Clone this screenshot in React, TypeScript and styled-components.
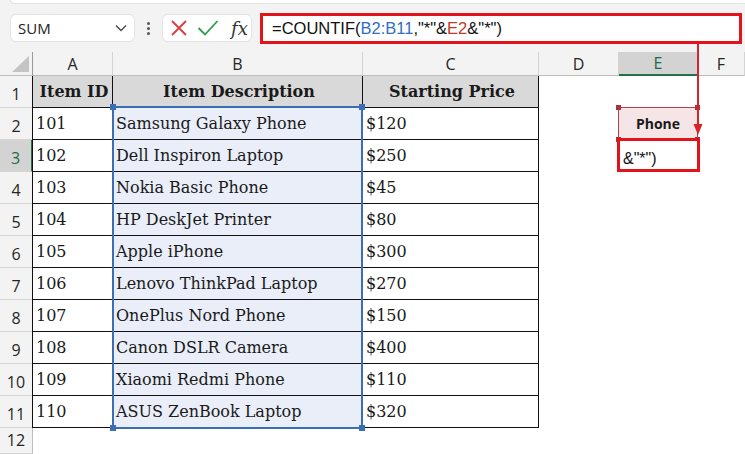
import * as React from 'react'
import styled, { createGlobalStyle } from 'styled-components'

const rows: [string, string, string][] = [
  ['101', 'Samsung Galaxy Phone', '$120'],
  ['102', 'Dell Inspiron Laptop', '$250'],
  ['103', 'Nokia Basic Phone', '$45'],
  ['104', 'HP DeskJet Printer', '$80'],
  ['105', 'Apple iPhone', '$300'],
  ['106', 'Lenovo ThinkPad Laptop', '$270'],
  ['107', 'OnePlus Nord Phone', '$150'],
  ['108', 'Canon DSLR Camera', '$400'],
  ['109', 'Xiaomi Redmi Phone', '$110'],
  ['110', 'ASUS ZenBook Laptop', '$320'],
]

const letters = ['A', 'B', 'C', 'D', 'E', 'F']

const App: React.FC = () => (
  <Page>
    <GlobalStyle />
    <TopBar>
      <RibbonEdge />
      <FormulaRow>
        <NameBox>
          <span>SUM</span>
          <svg width="12" height="8" viewBox="0 0 12 8">
            <path d="M1 1.5 L6 6.5 L11 1.5" fill="none" stroke="#444" strokeWidth="1.3" />
          </svg>
        </NameBox>
        <Dots>
          <i />
          <i />
          <i />
        </Dots>
        <FxBox>
          <svg width="18" height="18" viewBox="0 0 18 18">
            <path d="M2 2 L16 16 M16 2 L2 16" stroke="#e0393e" strokeWidth="1.8" />
          </svg>
          <svg width="22" height="18" viewBox="0 0 22 18">
            <path d="M1.5 9 L8 15.5 L20.5 2" fill="none" stroke="#2f9a4c" strokeWidth="1.8" />
          </svg>
          <Fx>fx</Fx>
        </FxBox>
        <FormulaInput>
          =COUNTIF(<Ref $c="#2f6fc0">B2:B11</Ref>,"*"&amp;<Ref $c="#c0392b">E2</Ref>&amp;"*")
        </FormulaInput>
      </FormulaRow>
    </TopBar>

    <Sheet>
      <Corner>
        <svg width="17" height="16" viewBox="0 0 17 16">
          <path d="M17 0 L17 16 L0 16 Z" fill="#c4c4c4" />
        </svg>
      </Corner>
      {letters.map((l) => (
        <ColHead key={l} $active={l === 'E'}>
          {l}
        </ColHead>
      ))}

      {Array.from({ length: 12 }, (_, i) => (
        <RowHead key={i} $active={i === 2} style={{ gridRow: i + 2 }}>
          {i + 1}
        </RowHead>
      ))}

      <Cell $head $first style={{ gridRow: 2, gridColumn: 2 }}>Item ID</Cell>
      <Cell $head style={{ gridRow: 2, gridColumn: 3 }}>Item Description</Cell>
      <Cell $head style={{ gridRow: 2, gridColumn: 4 }}>Starting Price</Cell>

      {rows.map((r, i) => (
        <React.Fragment key={r[0]}>
          <Cell $first style={{ gridRow: i + 3, gridColumn: 2 }}>{r[0]}</Cell>
          <Cell $sel style={{ gridRow: i + 3, gridColumn: 3 }}>{r[1]}</Cell>
          <Cell style={{ gridRow: i + 3, gridColumn: 4 }}>{r[2]}</Cell>
        </React.Fragment>
      ))}

      <Selection>
        <Handle $x="left" $y="top" />
        <Handle $x="right" $y="top" />
        <Handle $x="left" $y="bottom" />
        <Handle $x="right" $y="bottom" />
      </Selection>

      <LookupCell>
        Phone
        <RedHandle $x="left" $y="top" />
        <RedHandle $x="right" $y="top" />
        <RedHandle $x="left" $y="bottom" />
        <RedHandle $x="right" $y="bottom" />
      </LookupCell>

      <EditCell>
        <Clipped>B11</Clipped>
        <span>&amp;"*")</span>
      </EditCell>
    </Sheet>

    <Arrow width="12" height="96" viewBox="0 0 12 96">
      <path d="M6 0 L6 84" stroke="#d8232a" strokeWidth="2" />
      <path d="M1.5 80 L10.5 80 L6 91 Z" fill="#d8232a" />
    </Arrow>
  </Page>
)

const GlobalStyle = createGlobalStyle`
  html, body {
    margin: 0;
    padding: 0;
    background: #ffffff;
  }
  * {
    box-sizing: border-box;
  }
`

const Page = styled.div`
  position: relative;
  width: 745px;
  height: 454px;
  overflow: hidden;
  font-family: 'Open Sans', 'Noto Sans', sans-serif;
`

const TopBar = styled.div`
  height: 52px;
  background: #f3f3f3;
`

const RibbonEdge = styled.div`
  height: 4px;
  margin-left: 10px;
  background: #ffffff;
  border-bottom: 1px solid #e2e2e2;
  border-left: 1px solid #e2e2e2;
  border-bottom-left-radius: 6px;
`

const FormulaRow = styled.div`
  display: flex;
  align-items: center;
  height: 40px;
  padding: 8px 3px 0 10px;
`

const NameBox = styled.div`
  width: 125px;
  height: 28px;
  display: flex;
  align-items: center;
  justify-content: space-between;
  padding: 0 7px 0 7px;
  background: #fff;
  border: 1px solid #e4e4e4;
  border-radius: 6px;
  font-size: 15px;
  color: #222;
`

const Dots = styled.div`
  width: 27px;
  display: flex;
  flex-direction: column;
  align-items: center;
  gap: 2px;

  i {
    width: 3px;
    height: 3px;
    border-radius: 50%;
    background: #555;
  }
`

const FxBox = styled.div`
  width: 90px;
  height: 28px;
  display: flex;
  align-items: center;
  gap: 9px;
  padding-left: 7px;
  background: #fff;
  border: 1px solid #e4e4e4;
  border-radius: 6px;
`

const Fx = styled.span`
  font-family: 'DejaVu Serif', 'Liberation Serif', serif;
  font-style: italic;
  font-size: 18px;
  color: #333;
  margin-left: 3px;
`

const FormulaInput = styled.div`
  flex: 1;
  margin-left: 8px;
  height: 31px;
  display: flex;
  align-items: center;
  padding-left: 9px;
  background: #fff;
  border: 3px solid #e3131b;
  font-family: 'Liberation Sans', Arial, sans-serif;
  font-size: 16.5px;
  color: #111;
  white-space: pre;
`

const Ref = styled.span<{ $c: string }>`
  color: ${(p) => p.$c};
`

const Sheet = styled.div`
  display: grid;
  grid-template-columns: 33px 80px 250px 176px 80px 79px 1fr;
  grid-template-rows: 24px repeat(11, 32px) 1fr;
  height: 402px;
  font-family: 'DejaVu Serif', 'Liberation Serif', serif;
`

const Corner = styled.div`
  grid-row: 1;
  grid-column: 1;
  display: flex;
  align-items: flex-end;
  justify-content: flex-end;
  padding: 0 3px 3px 0;
  background: #f3f3f3;
  border-right: 1px solid #9a9a9a;
  border-bottom: 1px solid #bdbdbd;
`

const ColHead = styled.div<{ $active?: boolean }>`
  grid-row: 1;
  display: flex;
  align-items: center;
  justify-content: center;
  background: ${(p) => (p.$active ? '#d3d3d3' : '#f3f3f3')};
  color: ${(p) => (p.$active ? '#1d6b3e' : '#262626')};
  border-right: 1px solid #d4d4d4;
  border-bottom: ${(p) => (p.$active ? '2px solid #217346' : '1px solid #bdbdbd')};
  font-family: 'Open Sans', 'Noto Sans', sans-serif;
  font-size: 16px;
`

const RowHead = styled.div<{ $active?: boolean }>`
  grid-column: 1;
  display: flex;
  align-items: flex-end;
  justify-content: center;
  padding-bottom: 2px;
  background: ${(p) => (p.$active ? '#d3d3d3' : '#f3f3f3')};
  color: ${(p) => (p.$active ? '#1d6b3e' : '#262626')};
  border-right: ${(p) => (p.$active ? '2px solid #217346' : '1px solid #bdbdbd')};
  border-bottom: 1px solid #d4d4d4;
  font-family: 'Open Sans', 'Noto Sans', sans-serif;
  font-size: 16px;
`

const Cell = styled.div<{ $head?: boolean; $sel?: boolean; $first?: boolean }>`
  display: flex;
  align-items: center;
  justify-content: ${(p) => (p.$head ? 'center' : 'flex-start')};
  padding-left: 3px;
  background: ${(p) => (p.$head ? '#d9d9d9' : p.$sel ? '#e9eef8' : '#fff')};
  border-right: 1px solid #111;
  border-bottom: 1px solid #111;
  margin-left: ${(p) => (p.$first ? '-1px' : '0')};
  border-left: ${(p) => (p.$first ? '1px solid #111' : 'none')};
  font-weight: ${(p) => (p.$head ? 700 : 400)};
  font-size: 16px;
  color: #1a1a1a;
  white-space: nowrap;
`

const Selection = styled.div`
  grid-column: 3;
  grid-row: 3 / 13;
  position: relative;
  margin: -2px 0 -1px -1px;
  border: 2px solid #3a6fb8;
  pointer-events: none;
`

const Handle = styled.span<{ $x: 'left' | 'right'; $y: 'top' | 'bottom' }>`
  position: absolute;
  width: 6px;
  height: 6px;
  background: #3a6fb8;
  ${(p) => p.$x}: -4px;
  ${(p) => p.$y}: -4px;
`

const LookupCell = styled.div`
  grid-column: 6;
  grid-row: 3;
  position: relative;
  margin: -1px 0 0 -1px;
  display: flex;
  align-items: center;
  justify-content: center;
  background: #f5e5e7;
  border: 1px solid #b2404c;
  font-family: 'Open Sans', 'Noto Sans', sans-serif;
  font-weight: 700;
  font-size: 14px;
  color: #1a1a1a;
`

const RedHandle = styled.span<{ $x: 'left' | 'right'; $y: 'top' | 'bottom' }>`
  position: absolute;
  width: 5px;
  height: 5px;
  background: #a8323e;
  ${(p) => p.$x}: -3px;
  ${(p) => p.$y}: -3px;
`

const EditCell = styled.div`
  grid-column: 6;
  grid-row: 4;
  margin: -2px -2px 0 -2px;
  display: flex;
  flex-direction: column;
  justify-content: flex-end;
  overflow: hidden;
  padding: 0 0 0 3px;
  background: #fff;
  border: 3px solid #e3131b;
  font-family: 'Liberation Sans', Arial, sans-serif;
  font-size: 16px;
  line-height: 20px;
  color: #111;
  white-space: pre;
  z-index: 1;
`

const Clipped = styled.span`
  flex: none;
  margin-bottom: 3px;
  padding-left: 16px;
  font-size: 13px;
  color: #555;
`

const Arrow = styled.svg`
  position: absolute;
  left: 692px;
  top: 44px;
  z-index: 3;
`

export default App
